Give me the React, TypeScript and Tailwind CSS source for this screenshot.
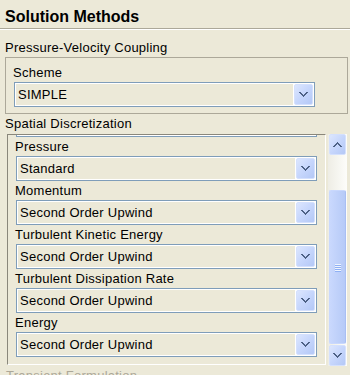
import React from "react";

function Arrow({ up = false }: { up?: boolean }) {
  return (
    <svg
      width="9"
      height="5"
      viewBox="0 0 9 5"
      shapeRendering="crispEdges"
      style={up ? { transform: "scaleY(-1)" } : undefined}
    >
      <path
        fill="#4d6185"
        d="M0 0h2v1H0z M7 0h2v1H7z M1 1h2v1H1z M6 1h2v1H6z M2 2h2v1H2z M5 2h2v1H5z M3 3h3v1H3z M4 4h1v1H4z"
      />
    </svg>
  );
}

function BlueButton({ up = false, className = "" }: { up?: boolean; className?: string }) {
  return (
    <div
      className={`flex items-center justify-center rounded-[2px] border border-[#d4e0fd] bg-gradient-to-br from-[#dce6fe] via-[#c6d6fc] to-[#b4c8f6] ${className}`}
    >
      <Arrow up={up} />
    </div>
  );
}

function Combo({ value }: { value: string }) {
  return (
    <div className="flex h-[25px] w-[301px] shrink-0 border border-[#7f9db9] bg-white p-[1px]">
      <div className="flex flex-1 items-center bg-[#ece9d8] pl-[2px] text-[13px] leading-none">{value}</div>
      <div className="w-[1px] bg-white" />
      <BlueButton className="w-[19px]" />
    </div>
  );
}

function Label({ text }: { text: string }) {
  return <div className="-ml-[1px] h-[19px] pt-[2px] text-[13px] leading-[15px]">{text}</div>;
}

export default function App() {
  const items: [string, string][] = [
    ["Pressure", "Standard"],
    ["Momentum", "Second Order Upwind"],
    ["Turbulent Kinetic Energy", "Second Order Upwind"],
    ["Turbulent Dissipation Rate", "Second Order Upwind"],
    ["Energy", "Second Order Upwind"],
  ];
  return (
    <div className="h-[375px] w-[350px] overflow-hidden bg-[#ece9d8] font-['Liberation_Sans',Arial,sans-serif] text-[13px] tracking-[0.25px] text-black">
      <div className="flex h-[29px] items-center border-b border-[#aca899] pl-[5px] pt-[6px]">
        <span className="text-[16px] font-bold leading-none tracking-normal">Solution Methods</span>
      </div>
      <div className="h-[1px] bg-white" />
      <div className="h-[27px] pl-[5px] pt-[10px] leading-[15px]">Pressure-Velocity Coupling</div>
      <div className="ml-[5px] mr-[2px] h-[57px] border border-[#aca899] pb-[6px] pl-[8px] pt-[7px]">
        <div className="-ml-[1px] leading-[15px]">Scheme</div>
        <div className="mt-[2px]">
          <Combo value="SIMPLE" />
        </div>
      </div>
      <div className="h-[20px] pl-[5px] pt-[2px] leading-[15px]">Spatial Discretization</div>
      <div className="ml-[7px] flex h-[232px] w-[340px] gap-[2px]">
        <div className="h-[231px] w-[319px] overflow-hidden border-b border-l border-r border-t border-b-white border-l-[#8a877b] border-r-white border-t-[#8a877b] pl-[8px]">
          <div className="-mt-[23px] flex flex-col">
            <Combo value="" />
            {items.map(([l, v]) => (
              <React.Fragment key={l}>
                <Label text={l} />
                <Combo value={v} />
              </React.Fragment>
            ))}
          </div>
        </div>
        <div className="flex h-[232px] w-[19px] flex-col bg-gradient-to-r from-[#eeede5] to-[#fdfdfa] px-[1px]">
          <BlueButton up className="h-[21px] w-[17px]" />
          <div className="h-[35px]" />
          <div className="flex h-[154px] w-[17px] flex-col items-center justify-center gap-[1px] rounded-[2px] border border-[#c9d8fd] border-r-[#a9bff3] bg-gradient-to-r from-[#c9d8fd] to-[#b6caf7]">
            <div className="h-[1px] w-[6px] bg-[#eef4fe] shadow-[0_1px_0_#8fb0f4]" />
            <div className="h-[1px] w-[6px] bg-[#eef4fe] shadow-[0_1px_0_#8fb0f4]" />
            <div className="h-[1px] w-[6px] bg-[#eef4fe] shadow-[0_1px_0_#8fb0f4]" />
            <div className="h-[1px] w-[6px] bg-[#eef4fe] shadow-[0_1px_0_#8fb0f4]" />
          </div>
          <div className="h-[1px]" />
          <BlueButton className="h-[21px] w-[17px]" />
        </div>
      </div>
      <div className="pl-[6px] pt-[2px] leading-[15px] text-[#aca899]">Transient Formulation</div>
    </div>
  );
}
